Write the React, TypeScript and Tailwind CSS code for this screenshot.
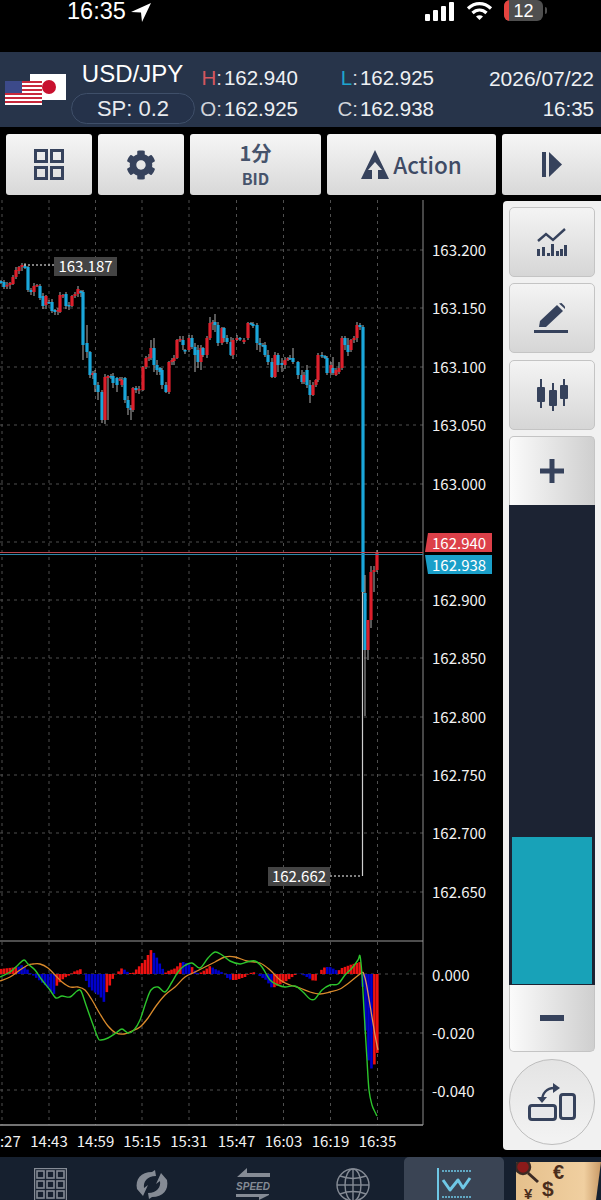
import React from 'react';
import { FaCog } from 'react-icons/fa';

const NAVY = '#36425c';

// x, open y, close y, optional wick top / bottom (all in page pixels)
type Candle = [number, number, number, number?, number?];

const candles: Candle[] = [
  [1, 281, 283], [4, 282, 287], [7, 286, 285], [10, 285, 283], [13, 284, 277], [16, 277, 270], [19, 271, 267], [22, 267, 265],
  [25, 266, 268], [28, 267, 290], [31, 290, 292], [34, 292, 286], [37, 286, 285], [40, 286, 298], [43, 296, 306], [46, 305, 296],
  [49, 302, 303], [52, 302, 311], [55, 310, 312], [58, 311, 310], [60, 312, 295], [63, 296, 295], [66, 294, 306], [69, 305, 306],
  [72, 306, 296], [75, 296, 294], [78, 294, 289], [81, 291, 293], [83, 292, 345, 290, 360], [87, 343, 352, 325, 358], [90, 352, 375], [93, 375, 373],
  [95, 373, 385, 370, 392], [98, 385, 392, 382, 400], [102, 392, 420], [105, 420, 377], [108, 378, 376, 375, 420], [111, 376, 377], [113, 376, 383, 373, 388], [117, 378, 385, 377, 392],
  [120, 380, 379], [122, 385, 380], [125, 378, 400], [128, 400, 408, 396, 415], [131, 408, 410, 405, 420], [133, 410, 388], [136, 388, 390], [139, 390, 389],
  [143, 390, 367], [146, 367, 358], [149, 358, 357], [151, 358, 348, 340, 360], [154, 348, 365, 338, 372], [157, 365, 370, 360, 375], [160, 368, 372], [162, 370, 385],
  [166, 385, 392], [169, 392, 362], [172, 362, 360], [174, 361, 358], [177, 358, 340], [180, 340, 339, 336, 342], [183, 340, 345, 336, 350], [185, 350, 350],
  [189, 350, 338, 335, 352], [192, 338, 347], [195, 347, 355, 343, 372], [198, 350, 362, 345, 368], [201, 362, 348, 345, 370], [203, 348, 355], [207, 355, 338], [210, 338, 323, 317, 340],
  [213, 323, 322, 320, 330], [215, 322, 325, 314, 332], [218, 325, 343], [222, 343, 328, 327, 345], [224, 328, 338, 327, 342], [227, 338, 342], [231, 342, 355, 337, 356], [233, 355, 340],
  [237, 340, 338], [240, 338, 339], [244, 342, 340, 338, 344], [248, 338, 323, 322, 340], [251, 323, 324], [253, 324, 326], [257, 325, 343, 323, 350], [260, 343, 345, 338, 352],
  [263, 345, 346], [265, 345, 355], [268, 355, 362, 350, 365], [272, 362, 377, 358, 378], [275, 377, 355], [278, 355, 365, 353, 372], [282, 363, 365, 358, 372], [285, 365, 360],
  [288, 360, 358], [290, 358, 358, 355, 360], [293, 358, 362, 348, 364], [298, 362, 375], [302, 375, 382, 370, 384], [304, 382, 375], [307, 370, 385, 365, 388], [310, 385, 395, 380, 403],
  [313, 395, 385], [316, 385, 380], [318, 380, 355, 353, 382], [322, 355, 356, 352, 358], [325, 356, 358], [327, 358, 373], [331, 373, 365, 362, 375], [333, 368, 373, 357, 375],
  [336, 375, 370], [339, 372, 368, 362, 374], [342, 368, 338, 336, 370], [345, 338, 345, 336, 350], [348, 345, 352, 338, 356], [351, 350, 340], [354, 340, 338], [357, 338, 325],
  [360, 325, 327, 323, 330], [363, 327, 592], [365, 593, 650, 575, 716], [368, 650, 620, 640, 660], [371, 620, 572, 566, 628], [374, 572, 570, 566, 592], [377, 570, 553, 550, 572],
];

const priceLabels = [
  ['163.200', 250], ['163.150', 308], ['163.100', 367], ['163.050', 425], ['163.000', 484],
  ['162.900', 600], ['162.850', 658], ['162.800', 717], ['162.750', 775], ['162.700', 833], ['162.650', 892],
] as const;

const timeLabels = [
  [2, '14:27'], [49, '14:43'], [95.5, '14:59'], [142, '15:15'], [189, '15:31'],
  [236.5, '15:47'], [283.5, '16:03'], [330.5, '16:19'], [377.5, '16:35'],
] as const;

const gridX = [2, 49, 95.5, 142, 189, 236.5, 283.5, 330.5, 377.5];
const gridY = [250, 308, 367, 425, 484, 542, 600, 658, 717, 775, 833, 892];

// macd histogram keyframes: x, value above zero (px), bar colour
const histR = '#ee1111';
const histB = '#0000cc';
const hist: [number, number, string][] = [
  [0, 5, histR], [18, 7, histR], [22, 9, histB], [28, 4, histB], [31, 0, histB],
  [34, -2, histB], [45, -11, histB], [55, -21, histB], [57, -11, histR], [64, -4, histR], [70, -1, histR], [73, 2, histR], [81, 5, histR],
  [84, -2, histB], [90, -15, histB], [100, -22, histB], [104, -28, histB], [106, -20, histR], [114, -2, histR], [116, 0, histR],
  [118, 2, histR], [122, 6, histR], [125, 4, histB], [129, 1, histB], [133, 1, histR], [145, 14, histR], [151, 24, histR],
  [155, 20, histB], [160, 10, histB], [165, 1, histB], [168, 3, histR], [176, 6, histR], [181, 12, histR], [184, 12, histB], [190, 9, histB],
  [193, 6, histR], [197, 1, histB], [200, 1, histB], [205, 4, histR], [210, 8, histR], [215, 5, histB], [220, 3, histB], [225, 0, histB],
  [228, -5, histB], [232, -6, histB], [236, -6, histR], [245, -3, histR], [250, 1, histR], [255, 2, histR], [258, -1, histB], [266, -6, histB],
  [272, -14, histB], [275, -13, histR], [285, -8, histR], [295, -1, histR], [300, 1, histB], [305, -2, histB], [312, -6, histB], [315, -8, histR],
  [318, -1, histR], [320, 3, histR], [325, 7, histR], [330, 7, histB], [338, 3, histB], [342, 6, histR], [350, 9, histR], [360, 12, histR],
  [362, -3, histB], [365, -50, histB], [368, -85, histB], [372, -96, histB], [375, -89, histR], [378, -76, histR],
];

const histBars = Array.from({ length: 129 }, (_, i) => {
  const x = 1 + i * 2.94;
  const nextIdx = hist.findIndex((k) => k[0] >= x);
  if (nextIdx <= 0) return { x, v: hist[0][1], color: hist[0][2] };
  const a = hist[nextIdx - 1];
  const b = hist[nextIdx];
  const v = a[1] + ((b[1] - a[1]) * (x - a[0])) / (b[0] - a[0] || 1);
  return { x, v, color: b[2] };
});

const macdLine =
  '0,977 10,972 18,965 24,960 28,964 35,970 42,980 50,990 56,998 62,996 70,997 77,991 81,991 86,1005 92,1022 98,1038 101,1040 108,1038 116,1033 122,1029 128,1033 134,1030 140,1020 146,1002 151,990 158,987 165,992 172,982 178,972 184,966 192,963 200,968 208,958 215,952 222,955 230,961 240,964 247,962 255,961 262,967 270,980 278,985 285,987 295,986 303,992 310,999 315,999 322,990 330,985 338,984 345,975 352,968 358,960 360,956 362,975 364,1010 367,1060 369,1090 372,1105 375,1112 377,1116';
const signalLine =
  '0,981 10,977 20,970 28,965 33,964 40,964 48,968 55,975 62,982 70,987 78,987 85,990 92,1000 100,1014 108,1026 116,1033 124,1034 132,1031 140,1027 148,1018 156,1006 165,995 175,987 185,977 195,972 205,967 215,962 225,957 235,957 247,961 260,963 270,970 280,980 290,985 300,988 310,992 320,994 330,992 340,989 350,982 360,974 363,972';
const signalTail = '363,972 366,982 370,1005 375,1035 378,1050';

// catmull-rom through the points so the indicator lines come out smooth
function smooth(points: string) {
  const p = points.split(' ').map((s) => s.split(',').map(Number));
  let d = `M${p[0][0]} ${p[0][1]}`;
  for (let i = 0; i < p.length - 1; i++) {
    const a = p[Math.max(i - 1, 0)];
    const b = p[i];
    const c = p[i + 1];
    const e = p[Math.min(i + 2, p.length - 1)];
    d += ` C${b[0] + (c[0] - a[0]) / 6} ${b[1] + (c[1] - a[1]) / 6} ${c[0] - (e[0] - b[0]) / 6} ${c[1] - (e[1] - b[1]) / 6} ${c[0]} ${c[1]}`;
  }
  return d;
}

function Chart() {
  return (
    <svg width={503} height={957} viewBox="0 200 503 957" className="shrink-0 block" style={{ fontFamily: '"Noto Sans CJK JP", "Noto Sans", sans-serif' }}>
      {gridY.map((y) => (
        <line key={y} x1={0} x2={423} y1={y} y2={y} stroke="#4f4f4f" strokeDasharray="3 4" />
      ))}
      {[974, 1033, 1090].map((y) => (
        <line key={y} x1={0} x2={423} y1={y} y2={y} stroke="#4f4f4f" strokeDasharray="3 4" />
      ))}
      {gridX.map((x) => (
        <line key={x} x1={x} x2={x} y1={200} y2={1125} stroke="#4f4f4f" strokeDasharray="3 4" />
      ))}
      <line x1={423} x2={423} y1={200} y2={1125} stroke="#8c8c8c" />
      <line x1={0} x2={423} y1={941} y2={941} stroke="#9a9a9a" />
      <line x1={0} x2={423} y1={1125} y2={1125} stroke="#9a9a9a" strokeWidth={1.5} />

      {/* candles */}
      <line x1={362.5} x2={362.5} y1={590} y2={876} stroke="#cfcfcf" strokeWidth={1.2} />
      {candles.map(([x, o, c, top, bottom], i) => {
        const hi = Math.min(o, c);
        const lo = Math.max(o, c);
        return (
          <g key={i}>
            <line x1={x} x2={x} y1={top ?? hi - 1 - ((i * 7) % 3)} y2={bottom ?? lo + 1 + ((i * 5) % 4)} stroke="#b0b0b0" />
            <rect x={x - 1.6} y={hi} width={3.2} height={Math.max(lo - hi, 1.5)} fill={c < o ? '#dc1f2b' : '#1aa6da'} />
          </g>
        );
      })}

      {/* bid / ask lines */}
      <line x1={0} x2={423} y1={552.5} y2={552.5} stroke="#b8474f" />
      <line x1={0} x2={423} y1={554.5} y2={554.5} stroke="#2f86a8" />

      {/* high / low markers */}
      <line x1={24} x2={54} y1={265} y2={265} stroke="#fff" strokeDasharray="2 2" />
      <rect x={54} y={257} width={63} height={19} fill="#444" />
      <text x={85.5} y={272} textAnchor="middle" fill="#fff" fontSize={15}>163.187</text>
      <line x1={330} x2={362} y1={876} y2={876} stroke="#fff" strokeDasharray="2 2" />
      <rect x={268} y={867} width={62} height={19} fill="#444" />
      <text x={299} y={882} textAnchor="middle" fill="#fff" fontSize={15}>162.662</text>

      {/* macd */}
      {histBars.map((b, i) => (
        <rect key={i} x={b.x - 1.3} y={b.v > 0 ? 974 - b.v : 974} width={2.6} height={Math.abs(b.v)} fill={b.color} />
      ))}
      <path d={smooth(signalLine)} fill="none" stroke="#d98a2b" strokeWidth={1.3} />
      <path d={smooth(signalTail)} fill="none" stroke="#e0935a" strokeWidth={1.3} />
      <path d={smooth(macdLine)} fill="none" stroke="#2cc52c" strokeWidth={1.4} />

      {/* axis */}
      {priceLabels.map(([label, y]) => (
        <text key={label} x={432} y={y + 6} fill="#f2f2f2" fontSize={15}>{label}</text>
      ))}
      {[['0.000', 975], ['-0.020', 1033], ['-0.040', 1091]].map(([label, y]) => (
        <text key={label} x={432} y={Number(y) + 6} fill="#f2f2f2" fontSize={15}>{label}</text>
      ))}
      <polygon points="428,533 492,533 492,552 425,552" fill="#dc4049" />
      <text x={432} y={549} fill="#fff" fontSize={15}>162.940</text>
      <polygon points="425,555 492,555 492,574 428,574" fill="#1a9fc9" />
      <text x={432} y={571} fill="#fff" fontSize={15}>162.938</text>

      {timeLabels.map(([x, label]) => (
        <text key={label} x={x} y={1147} textAnchor="middle" fill="#f2f2f2" fontSize={15}>{label}</text>
      ))}
    </svg>
  );
}

function StatusBar() {
  return (
    <div className="h-[52px] bg-black flex justify-between items-start text-white shrink-0">
      <div className="pl-[67px] pt-[1px] flex items-center gap-[5px] h-[23px]">
        <span className="text-[23.5px] font-medium leading-none">16:35</span>
        <svg width="21" height="19" viewBox="0 0 21 19"><polygon points="20,0 0,9 10,9.5 11,19" fill="#fff" /></svg>
      </div>
      <div className="pr-[54px] flex items-center gap-[11px] h-[21px]">
        <svg width="30" height="20" viewBox="0 0 30 20" fill="#fff">
          <rect x="0" y="13" width="5" height="7" rx="1" />
          <rect x="8" y="9" width="5" height="11" rx="1" />
          <rect x="16" y="5" width="5" height="15" rx="1" />
          <rect x="24" y="1" width="5" height="19" rx="1" />
        </svg>
        <svg width="27" height="20" viewBox="0 0 27 20" fill="none" stroke="#fff" strokeWidth="3.2">
          <path d="M2 7.5 C9 1 18 1 25 7.5" />
          <path d="M6.5 12 C10.5 8 16.5 8 20.5 12" />
          <path d="M13.5 19 L10 15.5 C12 13.8 15 13.8 17 15.5 Z" fill="#fff" stroke="none" />
        </svg>
        <div className="flex items-center gap-[2px]">
          <div className="w-[39px] h-[21px] rounded-[6px] bg-[#4f4f4f] overflow-hidden flex items-center">
            <div className="w-[5px] h-full bg-[#e5443f]" />
            <span className="flex-1 text-center pr-[5px] text-[18px] font-medium leading-none">12</span>
          </div>
          <div className="w-[2px] h-[7px] bg-[#4f4f4f] rounded-r" />
        </div>
      </div>
    </div>
  );
}

function Flags() {
  return (
    <div className="relative w-[71px] h-[75px] shrink-0">
      <div className="absolute left-[30px] top-[22px] w-[36px] h-[26px] bg-white flex items-center justify-center">
        <div className="w-[14px] h-[14px] rounded-full bg-[#c8102e] ml-[2px]" />
      </div>
      <svg className="absolute left-[5px] top-[29px]" width="37" height="24" viewBox="0 0 37 24">
        <rect width="37" height="24" fill="#fff" />
        {[0, 4, 8, 12, 16, 20].map((y) => (
          <rect key={y} y={y} width="37" height="2" fill="#c8283c" />
        ))}
        <rect width="17" height="12" fill="#3c4a8a" />
      </svg>
    </div>
  );
}

function Stat({ label, value, labelClass }: { label: string; value: string; labelClass: string }) {
  return (
    <div className="flex justify-end items-baseline">
      <span className={labelClass}>{label}</span>
      <span className="text-[#cfd3da]">:</span>
      <span className="ml-[2px] text-[#eef0f3]">{value}</span>
    </div>
  );
}

function Header() {
  return (
    <div className="h-[75px] bg-[#27344a] flex shrink-0 text-[20.5px] leading-none" style={{ fontFamily: '"Liberation Sans", Arial, sans-serif' }}>
      <Flags />
      <div className="w-[124px] shrink-0 flex flex-col items-center">
        <div className="text-[24px] font-medium text-white mt-[9px] h-[32px] leading-[26px] pr-[1px]">USD/JPY</div>
        <div className="w-[124px] h-[31px] rounded-full border border-[#3f4f69] bg-[#25324a] flex items-center justify-center text-[22px] text-[#e8eaee]">SP: 0.2</div>
      </div>
      <div className="w-[103px] shrink-0 flex flex-col gap-[10px] pt-[16px]">
        <Stat label="H" value="162.940" labelClass="text-[#d4575f]" />
        <Stat label="O" value="162.925" labelClass="text-[#cfd3da]" />
      </div>
      <div className="w-[136px] shrink-0 flex flex-col gap-[10px] pt-[16px]">
        <Stat label="L" value="162.925" labelClass="text-[#1ea5cf]" />
        <Stat label="C" value="162.938" labelClass="text-[#cfd3da]" />
      </div>
      <div className="flex-1 flex flex-col items-end gap-[10px] pt-[16px] pr-[7px] text-[#eef0f3]">
        <div className="text-[21px]">2026/07/22</div>
        <div>16:35</div>
      </div>
    </div>
  );
}

const toolBtn =
  'h-[61px] bg-linear-to-b from-[#f6f6f6] to-[#d8d8d8] rounded-[3px] flex items-center justify-center shrink-0';

function Toolbar() {
  return (
    <div className="h-[73px] bg-black pt-[7px] pl-[6px] flex gap-[6px] shrink-0 overflow-hidden" style={{ fontFamily: '"Noto Sans CJK JP", "Noto Sans", sans-serif' }}>
      <div className={`${toolBtn} w-[86px]`}>
        <svg width="30" height="31" viewBox="0 0 30 31" fill="none" stroke={NAVY} strokeWidth="3">
          <rect x="1.5" y="1.5" width="11" height="11" />
          <rect x="17.5" y="1.5" width="11" height="11" />
          <rect x="1.5" y="18.5" width="11" height="11" />
          <rect x="17.5" y="18.5" width="11" height="11" />
        </svg>
      </div>
      <div className={`${toolBtn} w-[86px]`}>
        <FaCog size={30} color={NAVY} />
      </div>
      <div className={`${toolBtn} w-[131px] flex-col font-bold text-[#46536b]`}>
        <span className="text-[20px] leading-[24px]">1分</span>
        <span className="text-[16px] leading-[22px] mt-[2px]">BID</span>
      </div>
      <div className={`${toolBtn} w-[169px] gap-[4px] text-[#3f4b65]`}>
        <svg width="28" height="29" viewBox="0 0 28 29">
          <path d="M14 0 L28 29 L17 29 L17 20 L21 20 L14 12 L7 20 L11 20 L11 29 L0 29 Z" fill={NAVY} />
        </svg>
        <span className="text-[22.5px] font-medium leading-none">Action</span>
      </div>
      <div className={`${toolBtn} w-[110px] pr-[11px]`}>
        <svg width="20" height="25" viewBox="0 0 20 25" fill={NAVY}>
          <rect x="0" y="0" width="4" height="25" />
          <polygon points="7,0 20,12.5 7,25" />
        </svg>
      </div>
    </div>
  );
}

const sideBtn =
  'w-[86px] h-[70px] mx-auto rounded-[5px] border border-[#c4c4c4] bg-linear-to-b from-[#f4f4f4] to-[#d6d6d6] flex items-center justify-center shrink-0';

function SidePanel() {
  return (
    <div className="w-[98px] h-[949px] mt-[1px] bg-[#f1f1f1] rounded-l-[4px] pt-[6px] flex flex-col shrink-0">
      <div className={sideBtn}>
        <svg width="30" height="28" viewBox="0 0 30 28" fill={NAVY}>
          <path d="M1 13 L9 6 L16 12 L28 1" fill="none" stroke={NAVY} strokeWidth="2.4" />
          <rect x="0" y="21" width="3" height="7" />
          <rect x="5" y="19" width="3" height="9" />
          <rect x="10" y="25" width="3" height="3" />
          <rect x="14" y="16" width="3" height="12" />
          <rect x="19" y="23" width="3" height="5" />
          <rect x="23" y="21" width="3" height="7" />
          <rect x="27" y="17" width="3" height="11" />
        </svg>
      </div>
      <div className={`${sideBtn} mt-[6px]`}>
        <svg width="36" height="30" viewBox="0 0 36 30" fill={NAVY}>
          <path d="M6 18 L23 2 L29 8 L12 24 L5 24 Z" />
          <path d="M25 0.5 L27.5 0 L31 3.5 L31 6 Z" />
          <rect x="0" y="27" width="34" height="3" />
        </svg>
      </div>
      <div className={`${sideBtn} mt-[7px]`}>
        <svg width="31" height="32" viewBox="0 0 31 32" fill={NAVY}>
          <rect x="3" y="0" width="2" height="29" />
          <rect x="0" y="8" width="8" height="15" rx="1" />
          <rect x="15" y="4" width="2" height="28" />
          <rect x="12" y="11" width="8" height="16" rx="1" />
          <rect x="26" y="0" width="2" height="27" />
          <rect x="23" y="6" width="8" height="14" rx="1" />
        </svg>
      </div>
      <div className="w-[86px] mx-auto mt-[6px] flex flex-col shrink-0">
        <div className="h-[69px] rounded-t-[5px] border border-b-0 border-[#c4c4c4] bg-linear-to-r from-[#fbfbfb] to-[#cfcfcf] flex items-center justify-center">
          <svg width="24" height="24" viewBox="0 0 24 24" fill={NAVY}>
            <rect x="0" y="9.5" width="24" height="5" />
            <rect x="9.5" y="0" width="5" height="24" />
          </svg>
        </div>
        <div className="h-[480px] bg-[#1c2333] flex flex-col justify-end px-[3px] pb-[1px]">
          <div className="h-[147px] bg-[#18a2b8]" />
        </div>
        <div className="h-[67px] rounded-b-[5px] border border-t-0 border-[#c4c4c4] bg-linear-to-r from-[#fbfbfb] to-[#cfcfcf] flex items-center justify-center">
          <svg width="24" height="6" viewBox="0 0 24 6" fill={NAVY}>
            <rect width="24" height="6" />
          </svg>
        </div>
      </div>
      <div className="w-[86px] h-[86px] mx-auto mt-[7px] rounded-full border border-[#bdbdbd] bg-linear-to-b from-[#e4e4e4] to-[#f3f3f3] flex items-center justify-center shrink-0">
        <svg width="48" height="38" viewBox="0 0 48 38">
          <path d="M14 18 C14 10 19 5 26 5" fill="none" stroke={NAVY} strokeWidth="2.4" />
          <polygon points="25,0 32,5 25,10" fill={NAVY} />
          <polygon points="9,14 19,14 14,20" fill={NAVY} />
          <rect x="1.5" y="22.5" width="26" height="14" rx="2.5" fill="#e6e7ea" stroke={NAVY} strokeWidth="3" />
          <rect x="32.5" y="11.5" width="14" height="24" rx="2.5" fill="#e6e7ea" stroke={NAVY} strokeWidth="3" />
        </svg>
      </div>
    </div>
  );
}

function BottomNav() {
  const gray = '#858b95';
  return (
    <div className="h-[43px] bg-[#16202f] flex shrink-0 overflow-hidden">
      <div className="w-[101px] flex justify-center pt-[11px]">
        <svg width="33" height="36" viewBox="0 0 33 36" fill="none" stroke={gray} strokeWidth="1.2">
          <rect x="0.6" y="0.6" width="31.8" height="35" />
          {[3, 13, 23].flatMap((y) =>
            [3, 13, 23].map((x) => <rect key={`${x}-${y}`} x={x} y={y} width="7" height="7" strokeWidth="1.6" />),
          )}
        </svg>
      </div>
      <div className="w-[101px] flex justify-center pt-[12px]">
        <svg width="34" height="31" viewBox="0 0 34 31" fill={gray}>
          <path d="M20 1 L21 7 C12 7 8 13 9 19 L13 16 L8 27 L2 20 C0 10 6 3 17 3 Z" />
          <path d="M14 30 L13 24 C22 24 26 18 25 12 L21 15 L26 4 L32 11 C34 21 28 28 17 28 Z" />
        </svg>
      </div>
      <div className="w-[101px] flex justify-center pt-[11px]">
        <svg width="34" height="32" viewBox="0 0 34 32" fill={gray}>
          <path d="M11 0 L11 5 L34 5 L34 9 L1 9 Z" />
          <text x="17" y="22" textAnchor="middle" fontSize="10" fontWeight="700" fontStyle="italic" fontFamily='"Liberation Sans", sans-serif'>SPEED</text>
          <path d="M0 26 L33 26 L33 27 L23 32 L23 29 L0 29 Z" />
        </svg>
      </div>
      <div className="w-[100px] flex justify-center pt-[11px]">
        <svg width="34" height="34" viewBox="0 0 34 34" fill="none" stroke={gray} strokeWidth="1.4">
          <circle cx="17" cy="17" r="16" />
          <ellipse cx="17" cy="17" rx="8" ry="16" />
          <line x1="17" y1="1" x2="17" y2="33" />
          <line x1="1" y1="17" x2="33" y2="17" />
          <path d="M4 8 C12 11 22 11 30 8" />
          <path d="M4 26 C12 23 22 23 30 26" />
        </svg>
      </div>
      <div className="w-[100px] ml-[1px] bg-[#3a4454] rounded-t-[5px] flex justify-center pt-[11px]">
        <svg width="36" height="32" viewBox="0 0 36 32" fill="none" stroke="#6fc8e6">
          <line x1="2" y1="0" x2="2" y2="32" strokeWidth="2" />
          <line x1="6" y1="3" x2="35" y2="3" strokeWidth="1.5" strokeDasharray="2 1" />
          <line x1="6" y1="29" x2="35" y2="29" strokeWidth="1.5" strokeDasharray="2 1" />
          <polyline points="7,12 14,22 22,12 27,20 34,10" strokeWidth="3" strokeLinejoin="round" />
        </svg>
      </div>
      <div className="flex-1 pl-[12px] pt-[5px]">
        <svg width="85" height="38" viewBox="0 0 85 38" style={{ fontFamily: '"Liberation Sans", sans-serif' }}>
          <defs>
            <linearGradient id="parch" x1="0" x2="1" y1="0" y2="0">
              <stop offset="0" stopColor="#e5c08c" />
              <stop offset="0.8" stopColor="#f0cfa0" />
              <stop offset="1" stopColor="#c99a66" />
            </linearGradient>
          </defs>
          <polygon points="0,0 85,0 80,38 0,38" fill="url(#parch)" />
          <line x1="12" y1="11" x2="22" y2="20" stroke="#3b2a24" strokeWidth="3" />
          <circle cx="7" cy="5" r="7" fill="#8c1a1a" stroke="#3b2a24" strokeWidth="2.5" />
          <text x="37" y="17" fontSize="20" fontWeight="700" fill="#4a2d1c">€</text>
          <text x="26" y="34" fontSize="21" fontWeight="700" fill="#4a2d1c">$</text>
          <text x="8" y="37" fontSize="15" fontWeight="700" fill="#4a2d1c">¥</text>
        </svg>
      </div>
    </div>
  );
}

export default function App() {
  return (
    <div className="w-[601px] h-[1200px] bg-black flex flex-col overflow-hidden" style={{ fontFamily: '"Liberation Sans", Arial, sans-serif' }}>
      <StatusBar />
      <Header />
      <Toolbar />
      <div className="h-[957px] flex shrink-0 bg-black">
        <Chart />
        <SidePanel />
      </div>
      <BottomNav />
    </div>
  );
}
